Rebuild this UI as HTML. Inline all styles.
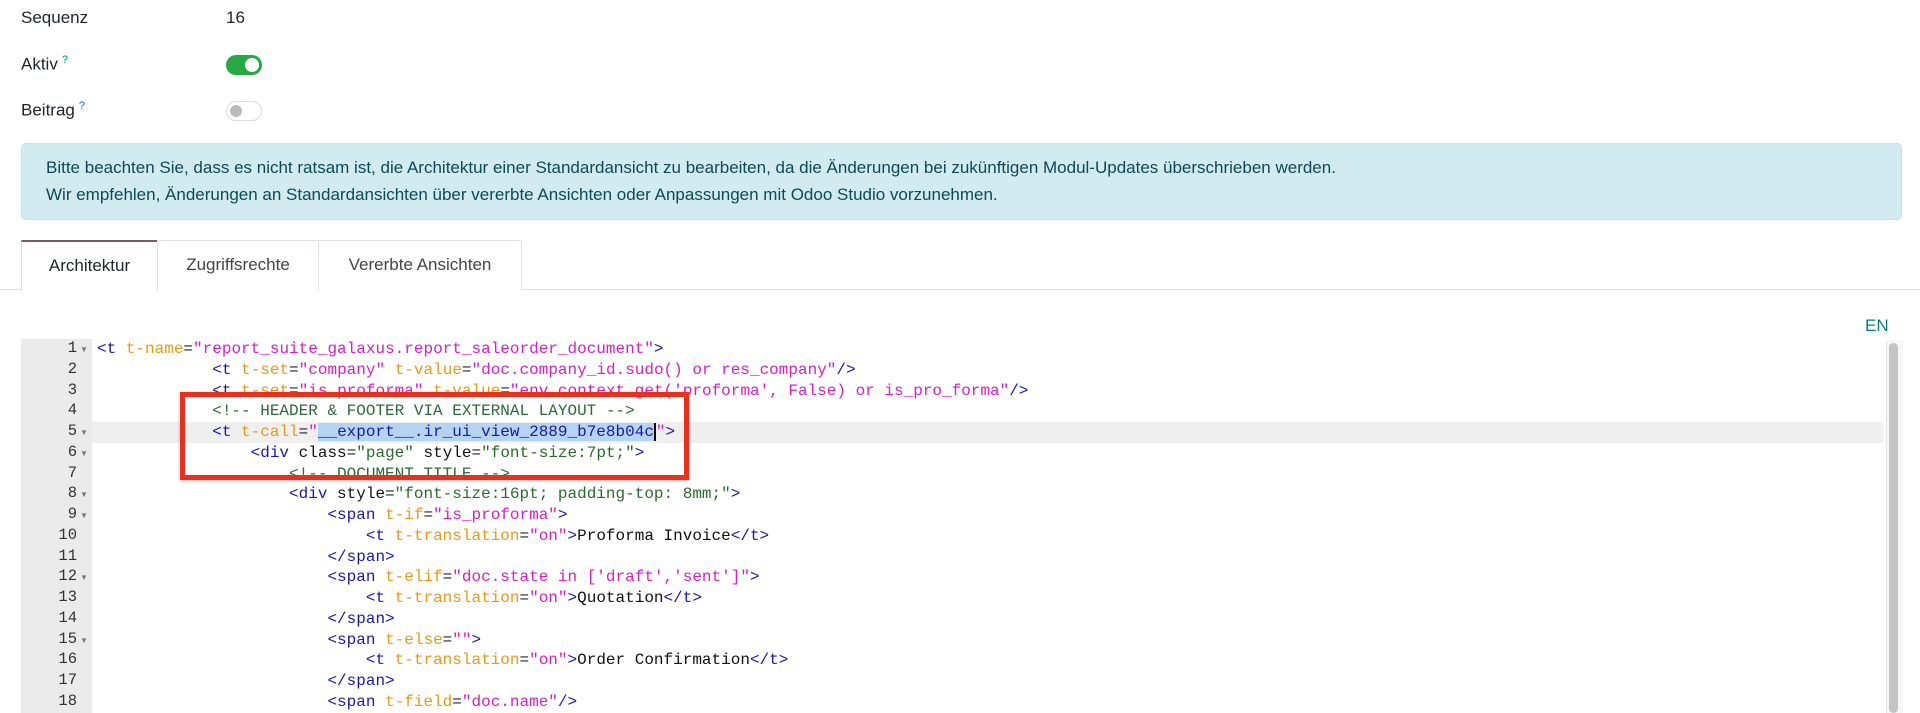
<!DOCTYPE html>
<html><head><meta charset="utf-8">
<style>
body{margin:0;width:1920px;height:713px;overflow:hidden;background:#fff;font-family:"Liberation Sans",sans-serif;color:#212529;position:relative}
.abs{position:absolute}
.lbl{font-size:17px;font-weight:500;color:#212529}
sup{color:#017e84;font-size:11px;margin-left:4px}
.tog{position:absolute;width:36px;height:20px;border-radius:10px}
.alert{left:21px;top:143px;width:1881px;height:77px;background:#d1ebf0;border:1px solid #bfe3ea;border-radius:5px;box-sizing:border-box;color:#0d4a55;font-size:17px;line-height:27px;padding:10px 0 0 24px}
.tab{top:240px;height:50px;box-sizing:border-box;border:1px solid #dee2e6;border-bottom:none;font-size:17px;color:#444;text-align:center;line-height:48px;background:#fff}
.gut{left:21px;top:339px;width:71px;height:374px;background:#ebebeb}
.code{left:0;top:339px;font-family:"Liberation Mono",monospace;font-size:16px;line-height:20.76px;white-space:pre}
.ln{position:absolute;left:21px;width:56px;text-align:right;color:#333;font-family:"Liberation Mono",monospace;font-size:15.5px}
.ar{position:absolute;left:80px;font-size:8px;color:#777}
.t{color:#1a1aa6}.a{color:#e39b1b}.v{color:#d51fc4}.c{color:#2d6a3a}.k{color:#111}.g{color:#2c6a2c}
.sel{background:#b5d3f3;color:#1a1aa6;border-right:2px solid #000}
</style></head><body>
<div class="abs lbl" style="left:21px;top:8px">Sequenz</div>
<div class="abs" style="left:226px;top:8px;font-size:17px">16</div>
<div class="abs lbl" style="left:21px;top:54px">Aktiv<sup>?</sup></div>
<div class="tog" style="left:226px;top:55px;background:#28a745"><div style="position:absolute;right:3px;top:3px;width:14px;height:14px;border-radius:50%;background:#fff"></div></div>
<div class="abs lbl" style="left:21px;top:100px">Beitrag<sup>?</sup></div>
<div class="tog" style="left:226px;top:101px;border:1px solid #ddd;box-sizing:border-box"><div style="position:absolute;left:3px;top:3px;width:12px;height:12px;border-radius:50%;background:#bbb"></div></div>
<div class="abs alert">Bitte beachten Sie, dass es nicht ratsam ist, die Architektur einer Standardansicht zu bearbeiten, da die Änderungen bei zukünftigen Modul-Updates überschrieben werden.<br>Wir empfehlen, Änderungen an Standardansichten über vererbte Ansichten oder Anpassungen mit Odoo Studio vorzunehmen.</div>
<div class="abs" style="left:0;top:289px;width:1920px;height:1px;background:#dee2e6"></div>
<div class="abs tab" style="left:21px;width:137px;border-top:2px solid #7a5a66;height:51px;color:#212529">Architektur</div>
<div class="abs tab" style="left:157px;width:162px">Zugriffsrechte</div>
<div class="abs tab" style="left:318px;width:204px">Vererbte Ansichten</div>
<div class="abs" style="left:1865px;top:316px;font-size:17px;color:#017e84">EN</div>
<div class="abs gut"></div>
<div class="abs" style="left:21px;top:422px;width:1862px;height:21px;background:#ebebeb"></div>
<div class="abs" style="left:92px;top:422px;width:1791px;height:21px;background:#efefef"></div>
<div class="abs" style="left:1886px;top:340px;width:16px;height:373px;background:#f7f7f7;border-left:1px solid #e5e5e5"></div>
<div class="abs" style="left:1889px;top:343px;width:9px;height:370px;background:#c4c4c4;border-radius:5px"></div>
<div class="abs" style="top:339px;left:0;width:100px;height:374px">
<div class="ln" style="top:0">1</div><div class="ar" style="top:6px">▼</div>
<div class="ln" style="top:20.76px">2</div>
<div class="ln" style="top:41.5px">3</div>
<div class="ln" style="top:62.3px">4</div>
<div class="ln" style="top:83px">5</div><div class="ar" style="top:89px">▼</div>
<div class="ln" style="top:103.8px">6</div><div class="ar" style="top:110px">▼</div>
<div class="ln" style="top:124.6px">7</div>
<div class="ln" style="top:145.3px">8</div><div class="ar" style="top:151px">▼</div>
<div class="ln" style="top:166px">9</div><div class="ar" style="top:172px">▼</div>
<div class="ln" style="top:186.8px">10</div>
<div class="ln" style="top:207.6px">11</div>
<div class="ln" style="top:228.4px">12</div><div class="ar" style="top:234px">▼</div>
<div class="ln" style="top:249px">13</div>
<div class="ln" style="top:269.9px">14</div>
<div class="ln" style="top:290.6px">15</div><div class="ar" style="top:297px">▼</div>
<div class="ln" style="top:311.4px">16</div>
<div class="ln" style="top:332px">17</div>
<div class="ln" style="top:353px">18</div>
</div>
<div class="abs code" style="left:97px"><span class="t">&lt;t</span> <span class="a">t-name</span>=<span class="v">"report_suite_galaxus.report_saleorder_document"</span><span class="t">&gt;</span>
            <span class="t">&lt;t</span> <span class="a">t-set</span>=<span class="v">"company"</span> <span class="a">t-value</span>=<span class="v">"doc.company_id.sudo() or res_company"</span><span class="t">/&gt;</span>
            <span class="t">&lt;t</span> <span class="a">t-set</span>=<span class="v">"is_proforma"</span> <span class="a">t-value</span>=<span class="v">"env.context.get('proforma', False) or is_pro_forma"</span><span class="t">/&gt;</span>
            <span class="c">&lt;!-- HEADER &amp; FOOTER VIA EXTERNAL LAYOUT --&gt;</span>
            <span class="t">&lt;t</span> <span class="a">t-call</span>=<span class="v">"</span><span class="sel">__export__.ir_ui_view_2889_b7e8b04c</span><span class="v">"</span><span class="t">&gt;</span>
                <span class="t">&lt;div</span> <span class="k">class</span>=<span class="g">"page"</span> <span class="k">style</span>=<span class="g">"font-size:7pt;"</span><span class="t">&gt;</span>
                    <span class="c">&lt;!-- DOCUMENT TITLE --&gt;</span>
                    <span class="t">&lt;div</span> <span class="k">style</span>=<span class="g">"font-size:16pt; padding-top: 8mm;"</span><span class="t">&gt;</span>
                        <span class="t">&lt;span</span> <span class="a">t-if</span>=<span class="v">"is_proforma"</span><span class="t">&gt;</span>
                            <span class="t">&lt;t</span> <span class="a">t-translation</span>=<span class="v">"on"</span><span class="t">&gt;</span><span class="k">Proforma Invoice</span><span class="t">&lt;/t&gt;</span>
                        <span class="t">&lt;/span&gt;</span>
                        <span class="t">&lt;span</span> <span class="a">t-elif</span>=<span class="v">"doc.state in ['draft','sent']"</span><span class="t">&gt;</span>
                            <span class="t">&lt;t</span> <span class="a">t-translation</span>=<span class="v">"on"</span><span class="t">&gt;</span><span class="k">Quotation</span><span class="t">&lt;/t&gt;</span>
                        <span class="t">&lt;/span&gt;</span>
                        <span class="t">&lt;span</span> <span class="a">t-else</span>=<span class="v">""</span><span class="t">&gt;</span>
                            <span class="t">&lt;t</span> <span class="a">t-translation</span>=<span class="v">"on"</span><span class="t">&gt;</span><span class="k">Order Confirmation</span><span class="t">&lt;/t&gt;</span>
                        <span class="t">&lt;/span&gt;</span>
                        <span class="t">&lt;span</span> <span class="a">t-field</span>=<span class="v">"doc.name"</span><span class="t">/&gt;</span></div>
<div class="abs" style="left:180px;top:392px;width:509px;height:88px;border:5px solid #e8301f;box-sizing:border-box;box-shadow:0 1px 3px rgba(0,0,0,.3)"></div>
</body></html>
